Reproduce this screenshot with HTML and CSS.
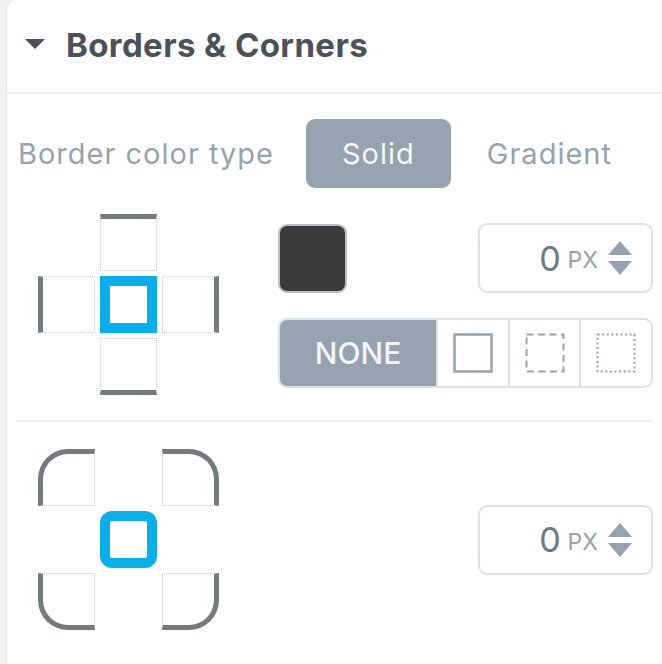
FILE: index.html
```html
<!DOCTYPE html>
<html lang="en">
<head>
<meta charset="utf-8">
<title>Borders &amp; Corners</title>
<link rel="stylesheet" href="styles.css">
</head>
<body>
<div class="panel">
  <div class="header">
    <svg class="caret" width="20" height="10" viewBox="0 0 20 10"><polygon points="0,0 20,0 10,10" fill="#4b515b"/></svg>
    <h2 class="title">Borders &amp; Corners</h2>
  </div>

  <div class="type-row">
    <span class="type-label">Border color type</span>
    <button class="type-btn active">Solid</button>
    <button class="type-btn">Gradient</button>
  </div>

  <div class="section">
    <div class="cross">
      <div class="cell edge-top"></div>
      <div class="cell edge-left"></div>
      <div class="cell center"></div>
      <div class="cell edge-right"></div>
      <div class="cell edge-bottom"></div>
    </div>
    <div class="controls">
      <div class="controls-top">
        <div class="swatch"></div>
        <div class="num-input">
          <span class="num">0</span><span class="unit">PX</span>
          <svg class="spin" width="24" height="34" viewBox="0 0 24 34"><polygon points="12,0 24,14 0,14" fill="#94a3af"/><polygon points="0,20 24,20 12,34" fill="#94a3af"/></svg>
        </div>
      </div>
      <div class="style-group">
        <div class="seg seg-none">NONE</div>
        <div class="seg"><svg width="40" height="40" viewBox="0 0 40 40"><rect x="1.5" y="1.5" width="37" height="37" fill="none" stroke="#94a3af" stroke-width="2.5"/></svg></div>
        <div class="seg"><svg width="40" height="40" viewBox="0 0 40 40"><rect x="1.5" y="1.5" width="37" height="37" fill="none" stroke="#94a3af" stroke-width="2" stroke-dasharray="7 4.5"/></svg></div>
        <div class="seg"><svg width="40" height="40" viewBox="0 0 40 40"><rect x="1.5" y="1.5" width="37" height="37" fill="none" stroke="#94a3af" stroke-width="2" stroke-dasharray="2 2.6"/></svg></div>
      </div>
    </div>
  </div>

  <div class="divider"></div>

  <div class="section section-corners">
    <div class="corners">
      <div class="cell corner-tl"></div>
      <div class="cell blank"></div>
      <div class="cell corner-tr"></div>
      <div class="cell blank"></div>
      <div class="cell center-round"></div>
      <div class="cell blank"></div>
      <div class="cell corner-bl"></div>
      <div class="cell blank"></div>
      <div class="cell corner-br"></div>
    </div>
    <div class="corner-controls">
      <div class="num-input">
        <span class="num">0</span><span class="unit">PX</span>
        <svg class="spin" width="24" height="34" viewBox="0 0 24 34"><polygon points="12,0 24,14 0,14" fill="#94a3af"/><polygon points="0,20 24,20 12,34" fill="#94a3af"/></svg>
      </div>
    </div>
  </div>
</div>
</body>
</html>
```

FILE: styles.css
```css
* { box-sizing: border-box; }

html, body {
  margin: 0;
  padding: 0;
}

body {
  background: #eef2f1;
  font-family: Inter, "Noto Sans", sans-serif;
  width: 662px;
  height: 664px;
  overflow: hidden;
}

.panel {
  margin-left: 6px;
  height: 664px;
  background: #ffffff;
  border-left: 1px solid #dfe6e6;
  border-top-left-radius: 10px;
}

.header {
  height: 94px;
  display: flex;
  align-items: center;
  padding-left: 18px;
  gap: 21px;
  border-bottom: 2px solid #eef0f1;
}

.caret {
  display: block;
  margin-top: -4px;
}

.title {
  margin: 0;
  font-size: 33px;
  font-weight: 700;
  color: #4b515b;
  letter-spacing: 0.4px;
  line-height: 1;
  margin-top: -2px;
}

.type-row {
  display: flex;
  align-items: center;
  padding: 25px 0 0 11px;
}

.type-label {
  font-size: 29px;
  color: #95a3ae;
  letter-spacing: 1px;
  margin-right: 32px;
}

.type-btn {
  height: 69px;
  padding: 0 36px;
  border: none;
  border-radius: 9px;
  background: transparent;
  font-family: Inter, "Noto Sans", sans-serif;
  font-size: 29px;
  letter-spacing: 1px;
  color: #95a3ae;
}

.type-btn.active {
  background: #94a3af;
  color: #f4f6f7;
}

.section {
  display: flex;
  align-items: flex-start;
  padding: 26px 9px 0 31px;
}

.cross, .corners {
  display: grid;
  grid-template-columns: 57px 57px 57px;
  grid-template-rows: 57px 57px 57px;
  gap: 5px;
  flex: none;
}

.cell {
  width: 57px;
  height: 57px;
}

.cross .edge-top { grid-column: 2; grid-row: 1; }
.cross .edge-left { grid-column: 1; grid-row: 2; }
.cross .center { grid-column: 2; grid-row: 2; }
.cross .edge-right { grid-column: 3; grid-row: 2; }
.cross .edge-bottom { grid-column: 2; grid-row: 3; }

.edge-top, .edge-left, .edge-right, .edge-bottom {
  border: 1px dotted #bfc7cc;
}

.edge-top { border-top: 5px solid #737b7e; }
.edge-bottom { border-bottom: 5px solid #737b7e; }
.edge-left { border-left: 5px solid #737b7e; }
.edge-right { border-right: 5px solid #737b7e; }

.center {
  border: 10px solid #0aaeea;
}

.controls {
  margin-left: 59px;
  margin-top: 9px;
  width: 375px;
  display: flex;
  flex-direction: column;
  gap: 25px;
}

.controls-top {
  display: flex;
  justify-content: space-between;
  align-items: center;
}

.swatch {
  width: 69px;
  height: 69px;
  background: #3b3b3b;
  border: 2px solid #b8c1c8;
  border-radius: 9px;
}

.num-input {
  width: 175px;
  height: 70px;
  border: 2px solid #dde2e6;
  border-radius: 9px;
  display: flex;
  align-items: center;
  justify-content: flex-end;
  padding-right: 19px;
}

.num {
  font-size: 34px;
  color: #6b7985;
  margin-right: 7px;
}

.unit {
  font-size: 23px;
  color: #94a3af;
  margin-top: 4px;
  margin-right: 10px;
}

.spin {
  display: block;
}

.style-group {
  height: 70px;
  display: flex;
  border: 2px solid #dde2e6;
  border-radius: 9px;
  overflow: hidden;
}

.seg {
  width: 72px;
  display: flex;
  align-items: center;
  justify-content: center;
  border-left: 2px solid #dde2e6;
}

.seg svg { display: block; }

.seg-none {
  width: 157px;
  border-left: none;
  background: #94a3af;
  color: #f2f4f5;
  font-size: 30px;
  font-weight: 500;
}

.divider {
  height: 2px;
  background: #eef0f1;
  margin: 25px 9px 0 10px;
}

.section-corners {
  align-items: center;
  padding-top: 27px;
}

.corner-tl, .corner-tr, .corner-bl, .corner-br {
  border: 1px dotted #bfc7cc;
}

.corner-tl {
  border-top: 5px solid #737b7e;
  border-left: 5px solid #737b7e;
  border-top-left-radius: 30px;
}

.corner-tr {
  border-top: 5px solid #737b7e;
  border-right: 5px solid #737b7e;
  border-top-right-radius: 30px;
}

.corner-bl {
  border-bottom: 5px solid #737b7e;
  border-left: 5px solid #737b7e;
  border-bottom-left-radius: 30px;
}

.corner-br {
  border-bottom: 5px solid #737b7e;
  border-right: 5px solid #737b7e;
  border-bottom-right-radius: 30px;
}

.center-round {
  border: 10px solid #0aaeea;
  border-radius: 12px;
}

.corner-controls {
  margin-left: 259px;
}
```
